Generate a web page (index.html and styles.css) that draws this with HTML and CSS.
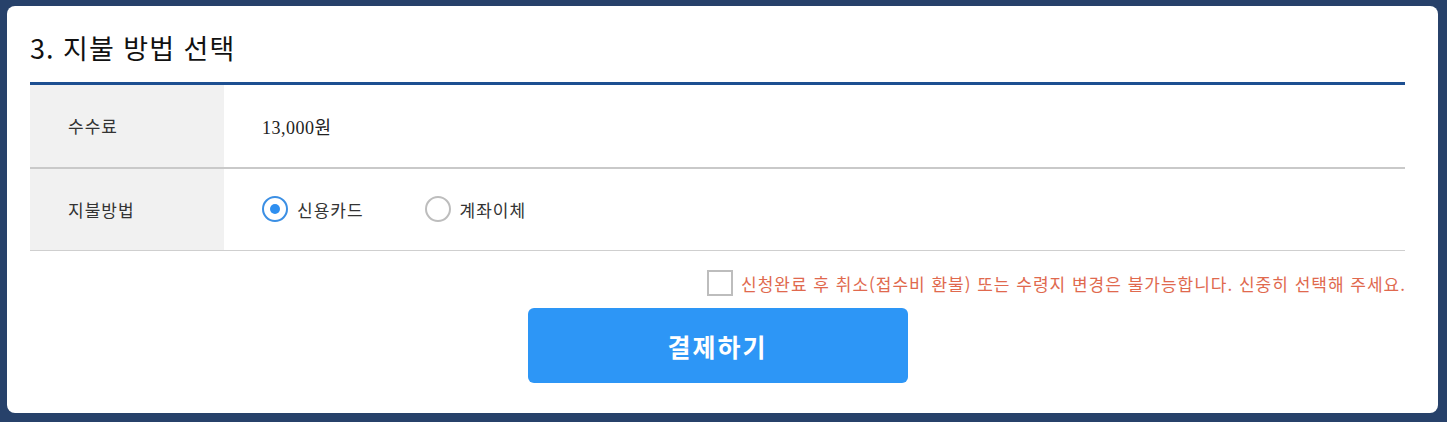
FILE: index.html
```html
<!DOCTYPE html>
<html lang="ko">
<head>
    <meta charset="UTF-8">
    <meta name="viewport" content="width=device-width, initial-scale=1.0">
    <title>지불 방법 선택</title>
    <link rel="stylesheet" href="styles.css">
</head>
<body>
    <div class="panel">
        <h2 class="section-title">3. 지불 방법 선택</h2>

        <table class="pay-table">
            <tr class="row-fee">
                <th>수수료</th>
                <td class="price">13,000원</td>
            </tr>
            <tr class="row-method">
                <th>지불방법</th>
                <td>
                    <div class="radio-group">
                        <label class="radio">
                            <input type="radio" name="method" value="card" checked>
                            <span class="dot"></span>
                            <span>신용카드</span>
                        </label>
                        <label class="radio">
                            <input type="radio" name="method" value="bank">
                            <span class="dot"></span>
                            <span>계좌이체</span>
                        </label>
                    </div>
                </td>
            </tr>
        </table>

        <label class="notice">
            <input type="checkbox" id="agreeCheck">
            <span class="box"></span>
            <span>신청완료 후 취소(접수비 환불) 또는 수령지 변경은 불가능합니다. 신중히 선택해 주세요.</span>
        </label>

        <div class="actions">
            <button type="button" id="payButton">결제하기</button>
        </div>
    </div>
</body>
</html>
```

FILE: styles.css
```css
body {
    margin: 0;
    background-color: #27416a;
    font-family: "Noto Sans CJK KR", "Noto Sans", sans-serif;
    color: #222;
}

.panel {
    margin: 6px 9px 9px 7px;
    height: 407px;
    box-sizing: border-box;
    padding: 24px 33px 0 23px;
    background-color: #fff;
    border-radius: 8px;
}

.section-title {
    margin: 0 0 16px 0;
    font-size: 27px;
    font-weight: normal;
    line-height: 36px;
    letter-spacing: 1px;
    color: #111;
}

.pay-table {
    width: 100%;
    border-collapse: collapse;
    border-top: 3px solid #1d4f91;
}

.pay-table th {
    width: 194px;
    padding: 0 0 0 38px;
    box-sizing: border-box;
    background-color: #f1f1f1;
    text-align: left;
    font-weight: normal;
    font-size: 17px;
    letter-spacing: 1px;
    color: #333;
}

.pay-table td {
    padding: 0 0 0 38px;
    font-size: 17px;
    color: #222;
}

.row-fee {
    height: 84px;
    border-bottom: 2px solid #c9c9c9;
}

.row-method {
    height: 83px;
    border-bottom: 1px solid #cfcfcf;
}

.pay-table .price {
    font-family: "Liberation Serif", "Noto Sans CJK KR", serif;
    font-size: 18px;
    letter-spacing: 0.5px;
}

.radio-group {
    display: flex;
    align-items: center;
    gap: 61px;
}

.radio {
    display: flex;
    align-items: center;
    gap: 9px;
    font-size: 17px;
    letter-spacing: 1px;
    color: #333;
    cursor: pointer;
}

.radio input,
.notice input {
    display: none;
}

.radio .dot {
    width: 26px;
    height: 26px;
    box-sizing: border-box;
    border: 2px solid #bdbdbd;
    border-radius: 50%;
    display: flex;
    align-items: center;
    justify-content: center;
}

.radio input:checked + .dot {
    border-color: #3b8fe4;
}

.radio input:checked + .dot::after {
    content: "";
    width: 10px;
    height: 10px;
    border-radius: 50%;
    background-color: #2e8ff0;
}

.notice {
    display: flex;
    justify-content: flex-end;
    align-items: center;
    gap: 8px;
    margin-top: 19px;
    margin-right: -1px;
    font-size: 17px;
    letter-spacing: 1px;
    color: #e0694e;
    cursor: pointer;
}

.notice .box {
    width: 26px;
    height: 26px;
    box-sizing: border-box;
    border: 2px solid #bdbdbd;
}

.actions {
    display: flex;
    justify-content: center;
    margin-top: 12px;
}

#payButton {
    width: 380px;
    height: 75px;
    background-color: #2d96f6;
    color: #fff;
    border: none;
    border-radius: 6px;
    font-family: "Noto Sans CJK KR", sans-serif;
    font-size: 25px;
    font-weight: bold;
    letter-spacing: 2px;
    cursor: pointer;
}

#payButton:hover {
    background-color: #1f86e6;
}
```
